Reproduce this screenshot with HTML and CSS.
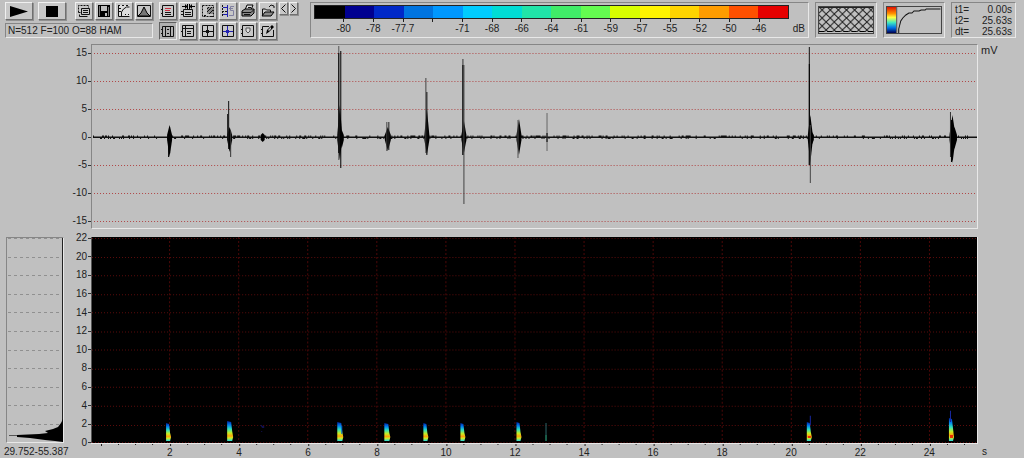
FILE: index.html
```html
<!DOCTYPE html>
<html lang="en">

<head>
    <meta charset="utf-8">
    <title>Spectrogram</title>
    <link rel="stylesheet" href="styles.css">
</head>

<body>
    <header class="toolbar">
        <div class="main-tools">
            <div class="button-row">
                <button class="wide" aria-label="Play"><svg width="18" height="11" viewBox="0 0 18 11"><path d="M0 0L18 5.5L0 11z"/></svg></button>
                <button class="wide" aria-label="Stop"><svg width="12" height="11" viewBox="0 0 12 11"><path d="M0 0h12v11H0z"/></svg></button>
                <span class="spacer"></span>
                <button aria-label="Copy"><svg class="icon" viewBox="0 0 14 14"><path class="dash" d="M1.5 8.5v-7h10v2M1.5 8.5h2"/><path class="line" d="M4.5 4.5h8v6h-8zM6 6.5h5M6 8.5h5M2.5 10.5v2h8"/></svg></button>
                <button aria-label="Save"><svg class="icon" viewBox="0 0 14 14"><path d="M1 1h12v12H1z"/><path fill="#c0c0c0" d="M4 2h6v5H4zM8 9h2v3H8z"/><path fill="#777" d="M2 2h1v10H2zM11 3h1v9h-1z"/></svg></button>
                <button aria-label="Transfer curve"><svg class="icon" viewBox="0 0 14 14"><path fill="#ddd" d="M1 1h12v12H1z"/><path class="line" d="M1.5 1.5v11h11M4.500 12V8l2-3 3-2h3M2 4.500h2M2 7.500h2M8 10.500h1M11 10.500h1M1 1.500h2M5 1.500h2M9 1.500h2"/></svg></button>
                <button aria-label="Window"><svg class="icon" viewBox="0 0 14 14"><path class="line" d="M.5 1.5h13v11H.5z"/><path fill="#777" stroke="#000" d="M1 12l3-3 3-6 3 6 3 3z"/></svg></button>
            </div>
            <div class="status sunken">N=512 F=100 O=88 HAM</div>
        </div>

        <div class="icon-grid">
            <button aria-label="Title"><svg class="icon" viewBox="0 0 14 14"><path class="line" d="M1.5 1.5h11v11h-11zM4 8.5h6M4 10.5h6M0 5.500h2M0 9.500h2"/><path class="red" d="M4 4.5h6M4 6.5h5"/></svg></button>
            <button aria-label="Cut section"><svg class="icon" viewBox="0 0 14 14"><path class="line" d="M2.500 5.500h9v7h-9zM4 8.500h6M4 10.500h6M0 7.500h2M0 10.500h2"/><path d="M1 2h3V0l2 2V0h1v5H6V3L4 5V3H1zM8 0h1v2l2-2v2h3v1h-3v2L9 3v2H8z"/></svg></button>
            <button aria-label="Select range"><svg class="icon" viewBox="0 0 14 14"><path class="dash" d="M1.500 1.500h11v11h-11z"/><path fill="#888" d="M6 3h6v7H6z"/><path class="line" d="M6 5l2-2M6 8l5-5M8 10l4-4M3 11.500h2M9 12.500h4"/></svg></button>
            <button aria-label="Spectrum"><svg class="icon" viewBox="0 0 14 14"><path class="dash" d="M1.500 1v12M1 7.500h5"/><path class="blue" d="M6.500 1v12M2 3.500h4M2 10.500h4"/><path class="gray" d="M13 2.500H9.500v4h3v5H8M8 4.500h4"/></svg></button>
            <button aria-label="Print"><svg class="icon" viewBox="0 0 14 14"><path fill="#ddd" stroke="#000" d="M4 6l2-5h6l-2 5z"/><path fill="#888" stroke="#000" d="M1 7l3-2h9v4l-3 3H1z"/><path class="line" d="M1 8.500h9l3-3M3 10.500h6M7 3.500h3"/></svg></button>
            <button aria-label="Open"><svg class="icon" viewBox="0 0 14 14"><path class="line" d="M1.500 11V5h3l1 1h4v2M8 3l2-2 3 1v2"/><path fill="#888" stroke="#000" d="M1 12l3-4h9l-3 4z"/></svg></button>
            <button class="pressed" aria-label="Columns"><svg class="icon" viewBox="0 0 14 14"><path class="line" d="M1.500 2.500h11v10h-11zM4.500 2v10M9.500 2v10M6 5.500h2M6 9.500h2M0 5.500h2M0 9.500h2"/></svg></button>
            <button aria-label="Panel"><svg class="icon" viewBox="0 0 14 14"><path class="line" d="M1.500 1.500h11v11h-11zM1 4.500h11M4.500 2v10M6 7.500h4M6 9.500h4M0 7.500h2"/></svg></button>
            <button aria-label="Cross cursor"><svg class="icon" viewBox="0 0 14 14"><path class="line" d="M1.500 1.500h11v11h-11zM6.500 2v10M2 7.500h10M5 6.500h3M5 8.500h3"/></svg></button>
            <button aria-label="Blue cursor"><svg class="icon" viewBox="0 0 14 14"><path class="line" d="M1.500 1.500h11v11h-11z"/><path class="blue" d="M6.500 2v10M2 7.500h10M5 6.500h3M5 8.500h3"/></svg></button>
            <button aria-label="Marker"><svg class="icon" viewBox="0 0 14 14"><path class="line" d="M1.500 1.500h11v11h-11zM0 5.500h2M0 9.500h2"/><path fill="#ddd" stroke="#555" d="M5 4h4v3L7 9 5 7z"/></svg></button>
            <button aria-label="Edit"><svg class="icon" viewBox="0 0 14 14"><path class="line" d="M8 2.500H1.500v10h11V6M0 5.500h2M0 9.500h2"/><path d="M5 10l1-4 5-5 2 2-5 5z"/><path fill="#ccc" d="M7 6l3-3v2L8 7z"/></svg></button>
        </div>
        <div class="steps">
            <button aria-label="Previous"><svg width="5" height="9" viewBox="0 0 5 9"><path class="arrow" d="M4.500.5l-4 4 4 4"/></svg></button>
            <button aria-label="Next"><svg width="5" height="9" viewBox="0 0 5 9"><path class="arrow" d="M.5.5l4 4-4 4"/></svg></button>
        </div>

        <div class="scale sunken">
            <div class="scale-body">
                <div class="colors" id="colors"></div>
                <div class="levels" id="levels"></div>
            </div>
            <span class="unit">dB</span>
        </div>

        <div class="mini sunken">
            <svg viewBox="0 0 55 28" preserveAspectRatio="none">
                <defs>
                    <pattern id="mesh" width="8" height="8" patternUnits="userSpaceOnUse">
                        <path d="M0 0l8 8M8 0l-8 8" stroke="#222" stroke-width="1" fill="none"/>
                    </pattern>
                </defs>
                <rect x=".5" y=".5" width="54" height="27" fill="none" stroke="#444"/>
                <rect x="1" y="2" width="53" height="24" fill="url(#mesh)"/>
                <path d="M1 1.500h53" stroke="#222"/>
                <path d="M1 25.500h53" stroke="#000" stroke-dasharray="5 3"/>
            </svg>
        </div>
        <div class="mini sunken">
            <svg viewBox="0 0 55 28" preserveAspectRatio="none">
                <defs>
                    <linearGradient id="rainbow" x2="0" y2="1">
                        <stop offset="0" stop-color="#e01000"/>
                        <stop offset=".25" stop-color="#ff9000"/>
                        <stop offset=".4" stop-color="#ffff40"/>
                        <stop offset=".6" stop-color="#40e8c0"/>
                        <stop offset=".8" stop-color="#0070e8"/>
                        <stop offset="1" stop-color="#000050"/>
                    </linearGradient>
                </defs>
                <rect x=".5" y=".5" width="54" height="27" fill="none" stroke="#444"/>
                <rect x="1" y="1" width="9" height="26" fill="url(#rainbow)"/>
                <path d="M10.500 1v26" stroke="#555"/>
                <path d="M12.500 27v-4l1-4 1-4 2-3 3-3 3-2h3l2-2h5l2-1h4l1-1h14" fill="none" stroke="#111"/>
            </svg>
        </div>
        <dl class="times sunken">
            <dt>t1=</dt><dd>0.00s</dd>
            <dt>t2=</dt><dd>25.63s</dd>
            <dt>dt=</dt><dd>25.63s</dd>
        </dl>
    </header>

    <main class="plots">
        <div class="y-axis wave-axis" id="waveAxis"></div>
        <div class="wave sunken"><svg id="wave" viewBox="0 0 884 183" preserveAspectRatio="none"></svg></div>
        <span class="wave-unit">mV</span>

        <div class="profile sunken">
            <svg id="profile" viewBox="0 0 56 204" preserveAspectRatio="none"></svg>
        </div>
        <div class="y-axis freq-axis" id="freqAxis"></div>
        <div class="spectrum"><svg id="spectrum" viewBox="0 0 884 205" preserveAspectRatio="none"></svg></div>

        <span class="range">29.752-55.387</span>
        <div class="time-axis">
            <svg id="ticks" viewBox="0 0 884 3" preserveAspectRatio="none"></svg>
            <div class="seconds" id="seconds"></div>
        </div>
        <span class="time-unit">s</span>
    </main>

    <script src="script.js"></script>
</body>

</html>
```

FILE: styles.css
```css
* {
    box-sizing: border-box;
}

body {
    margin: 0;
    min-height: 100vh;
    display: flex;
    flex-direction: column;
    background-color: #c0c0c0;
    color: #222;
    font-family: "Liberation Sans", Arial, sans-serif;
    font-size: 10px;
    line-height: 12px;
}

svg {
    display: block;
}

.sunken {
    border: 1px solid;
    border-color: #868686 #e8e8e8 #e8e8e8 #868686;
}

/* toolbar */
.toolbar {
    display: flex;
    align-items: flex-start;
    gap: 6px;
    padding: 2px 8px 0 5px;
}

.main-tools {
    display: flex;
    flex-direction: column;
    gap: 3px;
    width: 148px;
}

.button-row {
    display: flex;
    gap: 2px;
}

.spacer {
    flex: 1;
}

button {
    display: flex;
    align-items: center;
    justify-content: center;
    width: 18px;
    height: 18px;
    padding: 0;
    background-color: #c8c8c8;
    border: 1px solid;
    border-color: #f0f0f0 #707070 #707070 #f0f0f0;
    box-shadow: 1px 1px 0 #909090;
}

button.wide {
    width: 28px;
    margin-right: 3px;
}

button.pressed {
    background-color: #b0b0b0;
    border-color: #606060 #e8e8e8 #e8e8e8 #606060;
    box-shadow: none;
}

.icon {
    width: 14px;
    height: 14px;
}

.line,
.dash,
.red,
.blue,
.gray,
.arrow {
    fill: none;
    stroke: #111;
}

.dash {
    stroke-dasharray: 2 1;
}

.red {
    stroke: #c83040;
}

.blue {
    stroke: #2020b0;
}

.gray {
    stroke: #8080a0;
}

.status {
    height: 15px;
    padding-left: 2px;
    line-height: 13px;
    white-space: nowrap;
}

.icon-grid {
    display: grid;
    grid-template-columns: repeat(6, 18px);
    gap: 2px;
}

.steps {
    display: flex;
    gap: 1px;
    margin-left: -4px;
}

.steps button {
    width: 9px;
    height: 13px;
}

.scale {
    flex: 1;
    height: 36px;
    margin-left: 6px;
    display: flex;
    align-items: flex-end;
    gap: 4px;
    padding: 3px 3px 2px;
}

.scale-body {
    flex: 1;
}

.colors {
    display: flex;
    height: 14px;
    border: 1px solid #222;
}

.colors span {
    flex: 1;
}

/* every label sits under the line between two colours */
.levels {
    display: grid;
    grid-template-columns: repeat(15, 1fr);
    margin: 0 3.125%;
    text-align: center;
}

.levels span::before {
    content: "";
    display: block;
    width: 1px;
    height: 3px;
    margin: 0 auto 1px;
    background-color: #222;
}

.mini {
    width: 62px;
    height: 36px;
    padding: 3px 2px;
}

.mini svg {
    width: 100%;
    height: 100%;
}

.times {
    display: grid;
    grid-template-columns: auto 1fr;
    width: 65px;
    height: 36px;
    margin: 0;
    padding: 1px 3px;
    line-height: 11px;
}

.times dd {
    margin: 0;
    text-align: right;
}

/* plots */
.plots {
    flex: 1;
    display: grid;
    grid-template-columns: 58px 27px 1fr 46px;
    grid-template-rows: minmax(120px, 185fr) 8px minmax(140px, 206fr) 15px;
    padding: 4px 0 0 6px;
}

.y-axis {
    display: flex;
    flex-direction: column;
    justify-content: space-between;
    text-align: right;
}

.y-axis span {
    display: flex;
    align-items: center;
    justify-content: flex-end;
    gap: 1px;
    height: 12px;
}

.y-axis span::after {
    content: "";
    width: 3px;
    height: 1px;
    background-color: #333;
}

.wave-axis {
    grid-area: 1 / 1 / 2 / 3;
    padding: 3px 0 2px;
}

.wave {
    grid-area: 1 / 3;
    min-height: 0;
}

.wave-unit {
    grid-area: 1 / 4;
    padding-left: 3px;
    font-size: 11px;
}

.profile {
    grid-area: 3 / 1;
}

.freq-axis {
    grid-area: 3 / 2;
    margin: -5px 0 -6px;
}

.spectrum {
    grid-area: 3 / 3;
    background-color: #000;
    border-right: 1px solid #e8e8e8;
    border-left: 1px solid #555;
}

.wave svg,
.profile svg,
.spectrum svg {
    width: 100%;
    height: 100%;
}

.wave,
.profile,
.spectrum {
    contain: size;
}

.range {
    grid-area: 4 / 1 / 5 / 3;
    margin-left: -2px;
    padding-top: 3px;
}

.time-axis {
    grid-area: 4 / 3;
    padding: 0 1px;
    border-top: 1px solid #e8e8e8;
}

.time-axis svg {
    width: 100%;
    height: 3px;
}

.seconds {
    display: grid;
    grid-template-columns: repeat(12, 1fr);
    margin: 0 1.5% 0 4.9%;
    line-height: 11px;
    text-align: center;
}

.time-unit {
    grid-area: 4 / 4;
    padding: 3px 0 0 4px;
}
```

FILE: script.js
```js
var colors = ["#000000", "#000090", "#0028c8", "#0074e0", "#0098ff", "#00ccff", "#00dcd4", "#20e4a8",
    "#40ec68", "#64fc50", "#d8ff00", "#fff400", "#ffd400", "#ff9c00", "#ff5000", "#e60000"];
var levels = ["-80", "-78", "-77.7", "", "-71", "-68", "-66", "-64", "-61", "-59", "-57", "-55", "-52", "-50", "-46"];

document.getElementById("colors").innerHTML =
    colors.map(c => `<span style="background-color: ${c}"></span>`).join("");

function labels(id, values) {
    document.getElementById(id).innerHTML = values.map(v => `<span>${v}</span>`).join("");
}

labels("levels", levels);
labels("waveAxis", [15, 10, 5, 0, -5, -10, -15]);
labels("freqAxis", [22, 20, 18, 16, 14, 12, 10, 8, 6, 4, 2, 0]);
labels("seconds", [2, 4, 6, 8, 10, 12, 14, 16, 18, 20, 22, 24]);

// waveform: thin spikes are [x, top, bottom, shade]
var spikes = [
    [77, 82, 108, "#000"], [76, 88, 112, "#000"],
    [135, 69, 95, "#111"], [136, 56, 104, "#111"], [138, 86, 112, "#333"],
    [246, 1, 115, "#555"], [246, 8, 108, "#000"], [248, 6, 123, "#000"],
    [294, 77, 106, "#444"], [296, 77, 105, "#222"],
    [333, 33, 108, "#444"], [334, 47, 110, "#111"],
    [370, 14, 110, "#333"], [370, 20, 110, "#000"], [371, 20, 159, "#444"],
    [425, 75, 113, "#555"],
    [454, 68, 106, "#666"], [454, 88, 97, "#000"],
    [716, 2, 120, "#111"], [716, 19, 120, "#000"], [717, 80, 138, "#444"],
    [857, 67, 112, "#333"], [858, 75, 117, "#000"]
];
// the thick part of every peak is [middle, top, bottom, width]
var bodies = [[77, 80, 112, 5], [137, 82, 107, 5], [170, 88, 97, 4], [247, 60, 115, 5], [249, 85, 103, 4],
    [295, 82, 106, 6], [334, 64, 110, 5], [371, 76, 108, 5], [426, 74, 110, 5], [717, 70, 118, 5],
    [718, 86, 101, 5], [859, 70, 118, 6], [861, 82, 104, 5]];

var wave = "";
for (var mv = -15; mv <= 15; mv += 5) {
    if (mv != 0) {
        var y = 92.5 - mv * 5.6;
        wave += `<path d="M2 ${y}H882" stroke="#b04848" stroke-dasharray="1 2" fill="none"/>`;
    }
}
function noiseAt(x) {
    var n = Math.sin(x * 12.9898) * 43758.5453;
    return n - Math.floor(n);
}
var noise = "";
for (var x = 1; x < 884; x++) {
    var up = noiseAt(x) > 0.7 ? 1 : 0;
    var down = noiseAt(x + 900) > 0.8 ? 1 : 0;
    noise += `M${x}.5 ${91.5 - up}V${93 + down}`;
}
wave += `<path d="${noise}" stroke="#111" fill="none"/>`;
bodies.forEach(b => {
    var half = b[3] / 2;
    var mid = b[0] + 0.5;
    wave += `<path d="M${mid} ${b[1]}L${mid + half} 90V95L${mid} ${b[2]}L${mid - half} 95V90z"/>`;
});
spikes.forEach(s => {
    wave += `<rect x="${s[0]}" y="${s[1]}" width="1" height="${s[2] - s[1]}" fill="${s[3]}"/>`;
});
document.getElementById("wave").innerHTML = wave;

// average spectrum on the left
var profile = "";
for (var i = 0; i < 11; i++) {
    var y = Math.round(i * 18.6) + 0.5;
    profile += `<path d="M1 ${y}H55" stroke="#909090" stroke-dasharray="3 3" fill="none"/>`;
}
profile += `<path d="M55.500 0V204" stroke="#222"/><path d="M2 197.500H12" stroke="#555"/>
    <path d="M56 181L54 185 51 189 46 191 38 193 41 195 32 196 10 197V199L23 200 38 202 48 203 56 204z"/>`;
document.getElementById("profile").innerHTML = profile;

// spectrogram: each call is [x, top, width at the bottom, opacity]
var calls = [[74, 185, 4, 1], [135, 183, 5, 1], [245, 184, 5, 1], [292, 185, 5, 1], [331, 185, 4, 1],
    [368, 185, 4, 1], [424, 184, 4, 1], [714, 184, 4, 1], [856, 180, 4, 1]];

var spectrum = `<defs><linearGradient id="heat" x2="0" y2="1">
    <stop offset="0" stop-color="#0020a0"/>
    <stop offset=".2" stop-color="#0080f0"/>
    <stop offset=".4" stop-color="#30e0c0"/>
    <stop offset=".6" stop-color="#c8f020"/>
    <stop offset=".75" stop-color="#ffa010"/>
    <stop offset=".85" stop-color="#d0f020"/>
    <stop offset="1" stop-color="#20d8e0"/>
    </linearGradient></defs>`;
for (var i = 0; i < 12; i++) {
    var y = Math.min(204.5, Math.round(i * 18.55) + 1.5);
    spectrum += `<path d="M0 ${y}H884" stroke="#5c0c0c" stroke-dasharray="1 2" fill="none"/>`;
}
for (var i = 0; i < 12; i++) {
    spectrum += `<path d="M${77.5 + i * 69} 0V205" stroke="#4c0808" stroke-dasharray="2 2" fill="none"/>`;
}
calls.forEach(c => {
    var x = c[0], top = c[1], w = c[2];
    spectrum += `<path d="M${x} ${top}L${x + w - 1} ${top + 1} ${x + w} ${top + 10} ${x + w + 1} 199 ${x + w} 203H${x}z" fill="url(#heat)" opacity="${c[3]}"/>`;
});
spectrum += `<path d="M249.500 188V196" stroke="#0060d0"/>
    <path d="M453.500 185V197" stroke="#2c6468"/>
    <path d="M453.500 197V203" stroke="#30b890"/>
    <path d="M717.500 178V187M857.500 173V184" stroke="#1828a0"/>
    <path d="M715 198h3v2h-3zM857 197h3v3h-3z" fill="#e83000"/>
    <path d="M168 187h2v1h2v2h-2zM169 193h1v1h-1z" fill="#101050"/>`;
document.getElementById("spectrum").innerHTML = spectrum;

// one tick every half second
var ticks = "";
for (var x = 8.5; x < 884; x += 17.25) {
    var major = Math.round((x - 8.5) / 17.25) % 4 == 0;
    ticks += `M${Math.round(x)}.5 0V${major ? 2 : 1}`;
}
document.getElementById("ticks").innerHTML = `<path d="${ticks}" stroke="#222" fill="none"/>`;
```
